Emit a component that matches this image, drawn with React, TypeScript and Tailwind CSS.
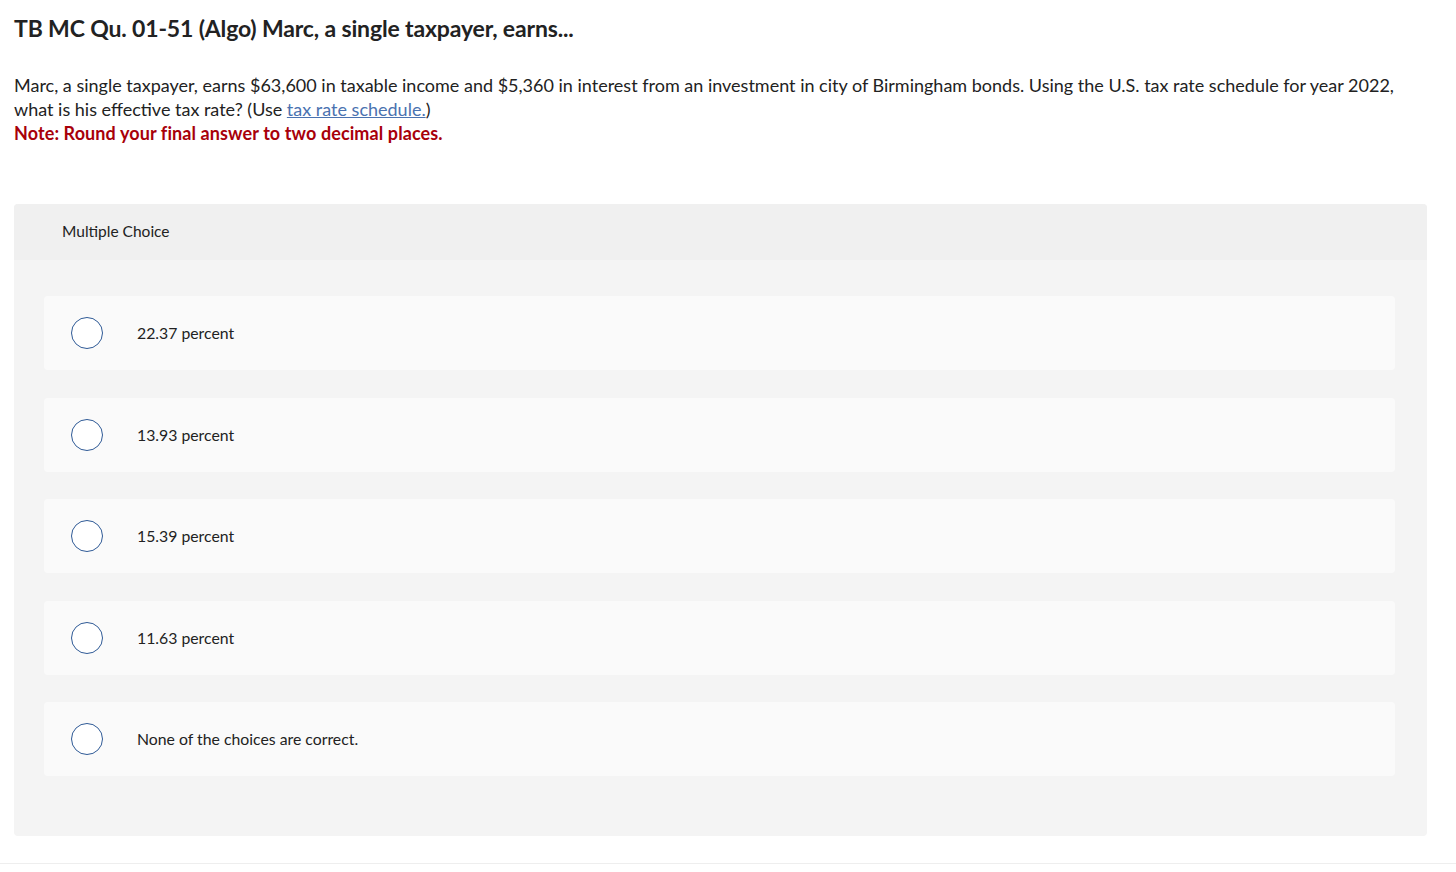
import React from 'react';

const choices = [
  '22.37 percent',
  '13.93 percent',
  '15.39 percent',
  '11.63 percent',
  'None of the choices are correct.',
];

export default function App() {
  return (
    <div className="min-h-[872px] bg-white font-['Lato',sans-serif] text-[#222]">
      <div className="pl-[14px] pr-[29px] pt-[13px]">
        <h1 className="text-[23px] font-bold leading-[30px] tracking-[-0.15px]">
          TB MC Qu. 01-51 (Algo) Marc, a single taxpayer, earns...
        </h1>

        <div className="mt-[30px] text-[18px] leading-[24px]">
          <p>
            Marc, a single taxpayer, earns $63,600 in taxable income and $5,360 in interest from an investment in city of
            Birmingham bonds. Using the U.S. tax rate schedule for year 2022, what is his effective tax rate? (Use{' '}
            <a href="#" className="text-[#4a72b0] underline">tax rate schedule.</a>)
          </p>
          <p className="font-bold text-[#a8000a] tracking-[0.1px]">Note: Round your final answer to two decimal places.</p>
        </div>

        {/* Multiple choice panel */}
        <div className="mt-[59px] rounded-[4px] bg-[#f4f4f4] overflow-hidden">
          <div className="h-[56px] bg-[#f0f0f0] flex items-center pl-[48px] text-[15.5px]">
            Multiple Choice
          </div>
          <div className="pl-[30px] pr-[32px] pt-[36px] pb-[60px] flex flex-col gap-[27.5px]">
            {choices.map((c) => (
              <div key={c} className="h-[74px] rounded-[4px] bg-[#fafafa] flex items-center pl-[27px]">
                <span className="w-[32px] h-[32px] rounded-full border border-[#2f5a96] bg-white shrink-0" />
                <span className="ml-[34px] text-[15.8px]">{c}</span>
              </div>
            ))}
          </div>
        </div>
      </div>
      <div className="mt-[27px] border-t border-[#eeeeee]" />
    </div>
  );
}
